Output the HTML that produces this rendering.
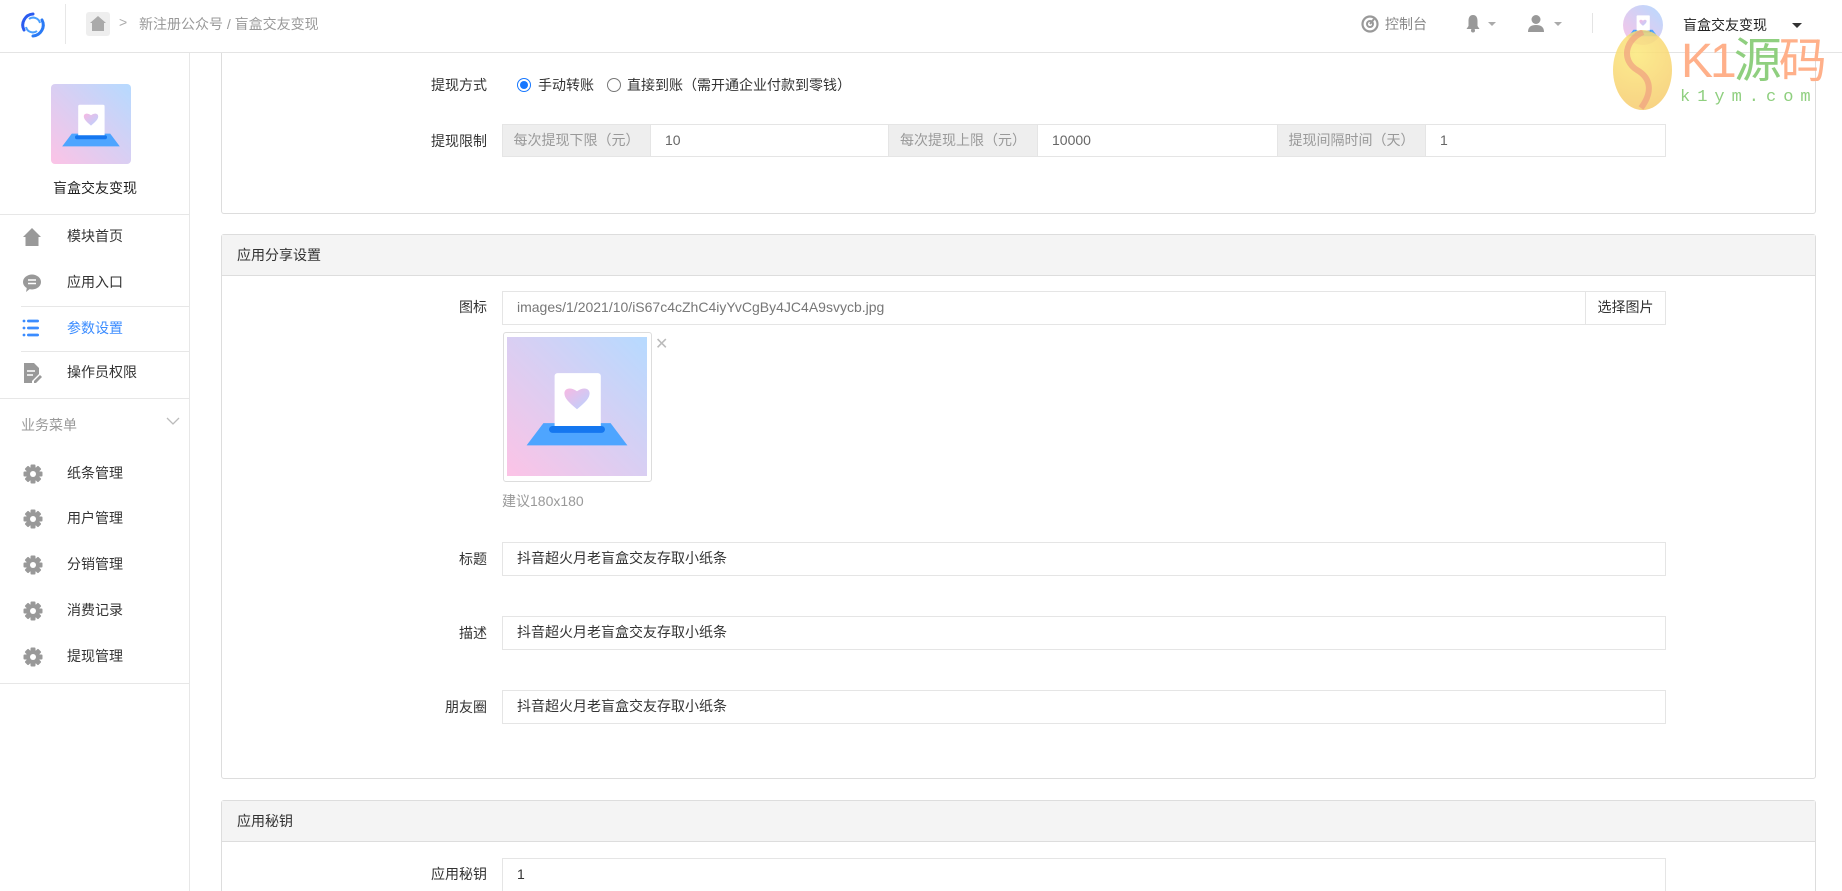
<!DOCTYPE html>
<html style="height:891px;overflow:hidden"><head><meta charset="utf-8">
<style>
*{margin:0;padding:0;box-sizing:border-box}
body{width:1842px;height:891px;overflow:hidden;background:#fff;font-family:"Liberation Sans","Noto Sans CJK SC",sans-serif;font-size:14px;color:#333;position:relative}
.a{position:absolute}
.hdr{left:0;top:0;width:1842px;height:53px;border-bottom:1px solid #e4e4e4;background:#fff}
.side{left:0;top:53px;width:190px;height:838px;border-right:1px solid #e7e7e7}
.hl{height:1px;background:#e7e7e7}
.mi{font-size:14px;color:#333;line-height:20px}
.card{border:1px solid #ddd;border-radius:3px;background:#fff}
.ch{background:#f4f4f4;border-bottom:1px solid #ddd}
.lbl{width:120px;text-align:right;line-height:20px}
.inp{border:1px solid #e5e5e5;background:#fff;line-height:31px;padding-left:14px;color:#333}
.add{background:#eee;border:1px solid #e5e5e5;color:#999;line-height:31px;text-align:center}
</style></head><body>
<svg width="0" height="0" style="position:absolute"><defs>
<linearGradient id="bg" x1="0" y1="1" x2="1" y2="0"><stop offset="0" stop-color="#fcc3e6"/><stop offset="1" stop-color="#b6daff"/></linearGradient>
<linearGradient id="ht" x1="0" y1="0" x2="1" y2="1"><stop offset="0" stop-color="#f7b8e2"/><stop offset="1" stop-color="#b8d3ff"/></linearGradient>
<symbol id="app" viewBox="0 0 100 100"><rect width="100" height="100" fill="url(#bg)"/><path d="M26 62H74L86 78H14Z" fill="#4ea5ff"/><rect x="34" y="26" width="33" height="42" rx="2" fill="#fff"/><rect x="30" y="64" width="40" height="5" rx="2.5" fill="#1577f0"/><path d="M50 52C44 47 41 44 41 40.5 41 37 45 35.5 50 39 55 35.5 59 37 59 40.5 59 44 56 47 50 52Z" fill="url(#ht)"/></symbol>
<symbol id="gear" viewBox="0 0 20 20"><circle cx="10" cy="10" r="7" fill="#999"/><g fill="#999"><rect x="7.5" y="0.5" width="5" height="4" rx="1"/><rect x="7.5" y="15.5" width="5" height="4" rx="1"/><rect x="0.5" y="7.5" width="4" height="5" rx="1"/><rect x="15.5" y="7.5" width="4" height="5" rx="1"/><rect x="7.5" y="0.5" width="5" height="4" rx="1" transform="rotate(45 10 10)"/><rect x="7.5" y="15.5" width="5" height="4" rx="1" transform="rotate(45 10 10)"/><rect x="0.5" y="7.5" width="4" height="5" rx="1" transform="rotate(45 10 10)"/><rect x="15.5" y="7.5" width="4" height="5" rx="1" transform="rotate(45 10 10)"/></g><circle cx="10" cy="10" r="3" fill="#fff"/></symbol>
</defs></svg>

<div class="a hdr"></div>
<svg class="a" style="left:19px;top:11px" width="28" height="28" viewBox="0 0 28 28"><path d="M14 3A11 11 0 0 0 5 19" stroke="#2a5bf0" stroke-width="3" fill="none" stroke-linecap="round"/><path d="M14 25A11 11 0 0 0 23 9" stroke="#2a7af5" stroke-width="3" fill="none" stroke-linecap="round"/><path d="M10 8A7 7 0 0 1 21 12" stroke="#4aa0ff" stroke-width="2" fill="none"/><path d="M18 20A7 7 0 0 1 7 16" stroke="#4aa0ff" stroke-width="2" fill="none"/></svg>
<div class="a" style="left:65px;top:4px;width:1px;height:40px;background:#e7e7e7"></div>
<div class="a" style="left:86px;top:12px;width:24px;height:24px;background:#eee;border-radius:3px"></div>
<svg class="a" style="left:90px;top:16px" width="16" height="15" viewBox="0 0 16 15"><path d="M8 0L0 7H2V15H14V7H16Z" fill="#aaa"/></svg>
<div class="a" style="left:119px;top:14px;color:#aaa;font-size:14px">&gt;</div>
<div class="a" style="left:139px;top:14px;color:#999;font-size:14px">新注册公众号 / 盲盒交友变现</div>

<svg class="a" style="left:1361px;top:15px" width="18" height="18" viewBox="0 0 18 18"><circle cx="9" cy="9" r="7.5" fill="none" stroke="#999" stroke-width="2.2"/><circle cx="9" cy="9" r="3" fill="none" stroke="#999" stroke-width="2"/><path d="M9 9L13 4" stroke="#999" stroke-width="2"/></svg>
<div class="a" style="left:1385px;top:14px;color:#888">控制台</div>
<svg class="a" style="left:1465px;top:14px" width="16" height="19" viewBox="0 0 16 19"><path d="M8 1C4.5 1 3.5 4 3.5 7V12L1.5 15H14.5L12.5 12V7C12.5 4 11.5 1 8 1Z" fill="#999"/><circle cx="8" cy="16.5" r="2" fill="#999"/></svg>
<div class="a" style="left:1488px;top:22px;border:4px solid transparent;border-top:4px solid #aaa"></div>
<svg class="a" style="left:1527px;top:14px" width="18" height="19" viewBox="0 0 18 19"><circle cx="9" cy="5.5" r="4.5" fill="#999"/><path d="M1 18C1 13 4 11 9 11S17 13 17 18Z" fill="#999"/></svg>
<div class="a" style="left:1554px;top:22px;border:4px solid transparent;border-top:4px solid #aaa"></div>
<div class="a" style="left:1592px;top:13px;width:1px;height:20px;background:#e4e4e4"></div>
<div class="a" style="left:1623px;top:5px;width:40px;height:40px;border-radius:50%;overflow:hidden"><svg width="40" height="40"><use href="#app"/></svg></div>
<div class="a" style="left:1683px;top:15px;color:#222">盲盒交友变现</div>
<div class="a" style="left:1792px;top:23px;border:5px solid transparent;border-top:5px solid #333"></div>

<!-- sidebar -->
<div class="a side"></div>
<svg class="a" style="left:51px;top:84px;border-radius:4px" width="80" height="80"><use href="#app"/></svg>
<div class="a" style="left:0;top:178px;width:190px;text-align:center;font-size:14px;color:#222">盲盒交友变现</div>
<div class="a hl" style="left:0;top:214px;width:190px"></div>
<div class="a hl" style="left:21px;top:306px;width:169px"></div>
<div class="a hl" style="left:21px;top:351px;width:169px"></div>
<div class="a hl" style="left:0;top:398px;width:190px"></div>
<div class="a hl" style="left:0;top:683px;width:190px"></div>
<svg class="a" style="left:22px;top:227px" width="20" height="20" viewBox="0 0 20 20"><path d="M10 1L1 10H3.5V19H16.5V10H19Z" fill="#999"/></svg>
<div class="a mi" style="left:67px;top:226px">模块首页</div>
<svg class="a" style="left:22px;top:273px" width="20" height="20" viewBox="0 0 20 20"><ellipse cx="10" cy="9" rx="9" ry="7.5" fill="#999"/><path d="M5 14L4 19 9 15Z" fill="#999"/><path d="M6 7H14M6 10.5H14" stroke="#fff" stroke-width="1.6"/></svg>
<div class="a mi" style="left:67px;top:272px">应用入口</div>
<svg class="a" style="left:22px;top:318px" width="20" height="20" viewBox="0 0 20 20"><g fill="#3b8cff"><circle cx="2" cy="3" r="1.4"/><rect x="5" y="1.6" width="12" height="2.8" rx="1.4"/><circle cx="2" cy="10" r="1.4"/><rect x="5" y="8.6" width="12" height="2.8" rx="1.4"/><circle cx="2" cy="17" r="1.4"/><rect x="5" y="15.6" width="12" height="2.8" rx="1.4"/></g></svg>
<div class="a mi" style="left:67px;top:318px;color:#3b8cff">参数设置</div>
<svg class="a" style="left:23px;top:362px" width="20" height="22" viewBox="0 0 20 22"><path d="M1 1H11L16 6V12L9 19V21H1Z" fill="#999"/><path d="M4 9H12M4 13H10" stroke="#fff" stroke-width="1.5"/><path d="M11 19L17 13 19 15 13 21H11Z" fill="#999"/></svg>
<div class="a mi" style="left:67px;top:362px">操作员权限</div>
<div class="a" style="left:21px;top:415px;color:#999">业务菜单</div>
<svg class="a" style="left:166px;top:417px" width="14" height="9" viewBox="0 0 14 9"><path d="M1 1L7 7 13 1" stroke="#bbb" stroke-width="1.3" fill="none"/></svg>
<svg class="a" style="left:23px;top:464px" width="20" height="20"><use href="#gear"/></svg><div class="a mi" style="left:67px;top:463px">纸条管理</div>
<svg class="a" style="left:23px;top:509px" width="20" height="20"><use href="#gear"/></svg><div class="a mi" style="left:67px;top:508px">用户管理</div>
<svg class="a" style="left:23px;top:555px" width="20" height="20"><use href="#gear"/></svg><div class="a mi" style="left:67px;top:554px">分销管理</div>
<svg class="a" style="left:23px;top:601px" width="20" height="20"><use href="#gear"/></svg><div class="a mi" style="left:67px;top:600px">消费记录</div>
<svg class="a" style="left:23px;top:647px" width="20" height="20"><use href="#gear"/></svg><div class="a mi" style="left:67px;top:646px">提现管理</div>

<!-- card 1 -->
<div class="a card" style="left:221px;top:53px;width:1595px;height:161px;border-top:none;border-radius:0 0 3px 3px"></div>
<div class="a lbl" style="left:367px;top:75px">提现方式</div>
<div class="a" style="left:517px;top:78px;width:14px;height:14px;border-radius:50%;border:1px solid #1677ff;background:#fff"><div style="margin:2px;width:8px;height:8px;border-radius:50%;background:#1677ff"></div></div>
<div class="a" style="left:538px;top:75px">手动转账</div>
<div class="a" style="left:607px;top:78px;width:14px;height:14px;border-radius:50%;border:1px solid #777"></div>
<div class="a" style="left:627px;top:75px">直接到账（需开通企业付款到零钱）</div>
<div class="a lbl" style="left:367px;top:131px">提现限制</div>
<div class="a add" style="left:502px;top:124px;width:149px;height:33px">每次提现下限（元）</div>
<div class="a inp" style="left:650px;top:124px;width:239px;height:33px;color:#666">10</div>
<div class="a add" style="left:888px;top:124px;width:150px;height:33px">每次提现上限（元）</div>
<div class="a inp" style="left:1037px;top:124px;width:241px;height:33px;color:#666">10000</div>
<div class="a add" style="left:1277px;top:124px;width:149px;height:33px">提现间隔时间（天）</div>
<div class="a inp" style="left:1425px;top:124px;width:241px;height:33px;color:#666">1</div>

<!-- card 2 -->
<div class="a card" style="left:221px;top:234px;width:1595px;height:545px"></div>
<div class="a ch" style="left:222px;top:235px;width:1593px;height:41px"></div>
<div class="a" style="left:237px;top:245px">应用分享设置</div>
<div class="a lbl" style="left:367px;top:297px">图标</div>
<div class="a inp" style="left:502px;top:291px;width:1084px;height:34px;color:#777">images/1/2021/10/iS67c4cZhC4iyYvCgBy4JC4A9svycb.jpg</div>
<div class="a inp" style="left:1585px;top:291px;width:81px;height:34px;padding:0;text-align:center">选择图片</div>
<div class="a" style="left:503px;top:332px;width:149px;height:150px;border:1px solid #ddd;border-radius:3px"></div>
<svg class="a" style="left:507px;top:337px" width="140" height="139" viewBox="0 0 100 100" preserveAspectRatio="none"><use href="#app"/></svg>
<div class="a" style="left:655px;top:334px;color:#bbb;font-size:16px">✕</div>
<div class="a" style="left:502px;top:491px;color:#999">建议180x180</div>
<div class="a lbl" style="left:367px;top:549px">标题</div>
<div class="a inp" style="left:502px;top:542px;width:1164px;height:34px">抖音超火月老盲盒交友存取小纸条</div>
<div class="a lbl" style="left:367px;top:623px">描述</div>
<div class="a inp" style="left:502px;top:616px;width:1164px;height:34px">抖音超火月老盲盒交友存取小纸条</div>
<div class="a lbl" style="left:367px;top:697px">朋友圈</div>
<div class="a inp" style="left:502px;top:690px;width:1164px;height:34px">抖音超火月老盲盒交友存取小纸条</div>

<!-- card 3 -->
<div class="a card" style="left:221px;top:800px;width:1595px;height:91px;border-bottom:none;border-radius:3px 3px 0 0"></div>
<div class="a ch" style="left:222px;top:801px;width:1593px;height:41px"></div>
<div class="a" style="left:237px;top:811px">应用秘钥</div>
<div class="a lbl" style="left:367px;top:864px">应用秘钥</div>
<div class="a inp" style="left:502px;top:858px;width:1164px;height:33px;border-bottom:none">1</div>

<!-- watermark -->
<div class="a" style="left:1613px;top:30px;width:59px;height:80px;border-radius:50%;background:radial-gradient(circle at 40% 30%,#fbe87a,#f5c66c);opacity:.85"></div>
<svg class="a" style="left:1613px;top:30px" width="59" height="80" viewBox="0 0 59 80"><path d="M30 2C12 10 8 30 24 40 38 48 40 62 28 78" stroke="#f0a080" stroke-width="6" fill="none" opacity=".7"/></svg>
<div class="a" style="left:1681px;top:34px;font-size:48px;line-height:56px;color:#ffb08a;letter-spacing:-3px">K1<span style="color:#8fcf7f">源</span>码</div>
<div class="a" style="left:1680px;top:88px;font-size:17px;color:#8fcf7f;letter-spacing:7px;font-family:'Liberation Mono',monospace">k1ym.com</div>
</body></html>
